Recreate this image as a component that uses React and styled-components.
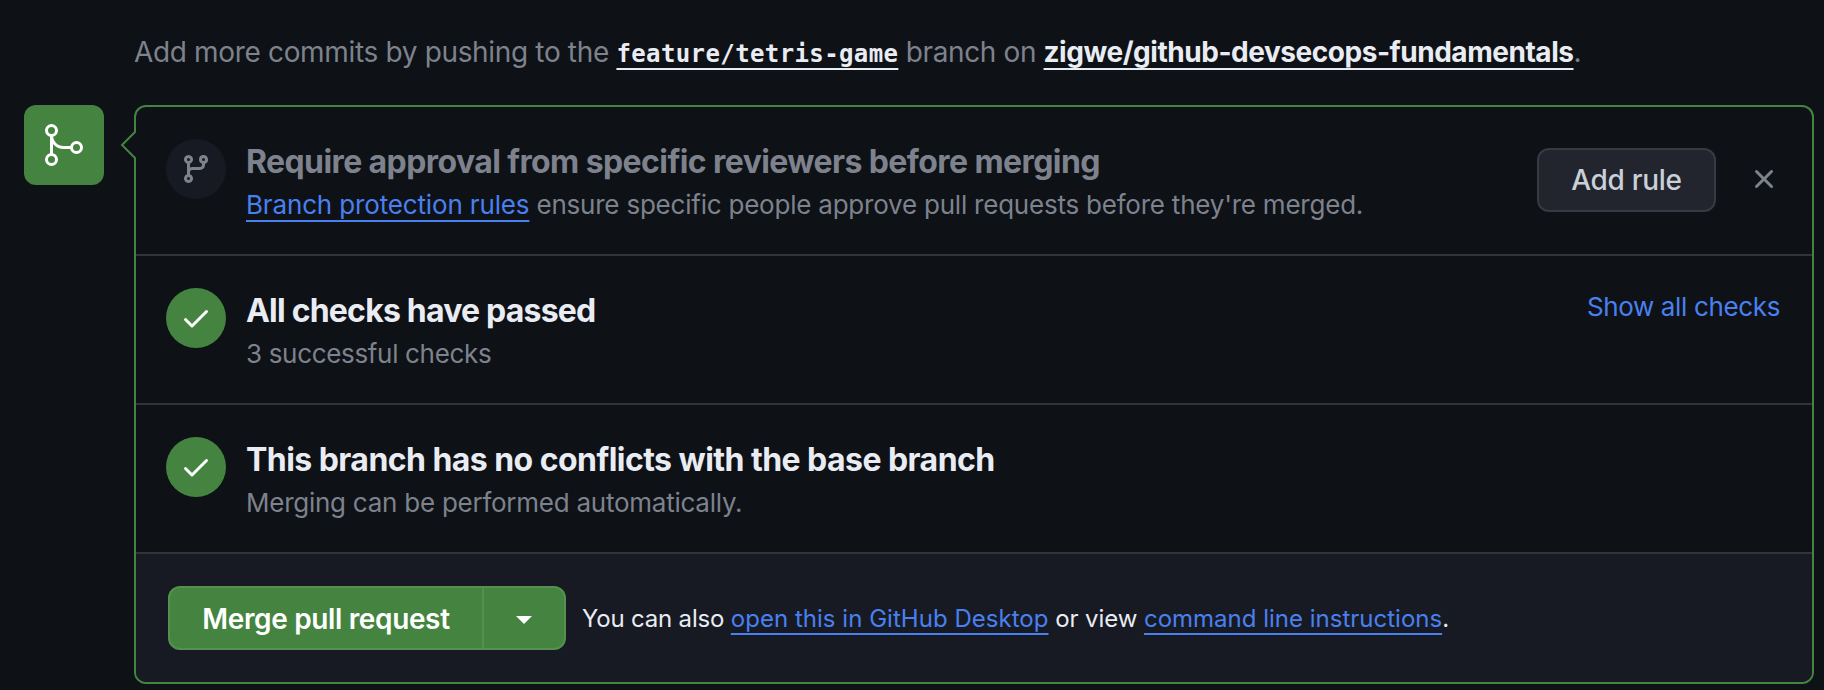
import React from "react";
import styled, { createGlobalStyle } from "styled-components";

const color = {
  canvas: "#0e1116",
  subtle: "#171a22",
  border: "#31353a",
  green: "#448440",
  greenEdge: "#549150",
  text: "#e9ecf2",
  muted: "#7d828d",
  link: "#4980f0",
};

const GlobalStyle = createGlobalStyle`
  * { box-sizing: border-box; }
  body {
    margin: 0;
    background: ${color.canvas};
    color: ${color.text};
    font-family: Inter, "Liberation Sans", sans-serif;
    -webkit-font-smoothing: antialiased;
  }
`;

const Page = styled.main`
  width: 1824px;
  height: 690px;
  padding: 31px 10px 0 24px;
  overflow: hidden;
`;

const Span = styled.span`
  letter-spacing: ${(p) => p.$track || 0}px;
`;

const Hint = styled.p`
  margin: 0 0 32px 110px;
  font-size: 28px;
  line-height: 42px;
  color: ${color.muted};
  white-space: pre;
`;

const Link = styled.a`
  display: inline-block;
  line-height: 1.15;
  color: ${(p) => (p.$strong ? color.text : color.link)};
  font-weight: ${(p) => (p.$strong ? 650 : 400)};
  letter-spacing: ${(p) => p.$track || 0}px;
  text-decoration: underline;
  text-decoration-thickness: 2px;
  text-underline-offset: 6px;
  text-decoration-skip-ink: none;
`;

const BranchLink = styled(Link)`
  font-family: "DejaVu Sans Mono", "Liberation Mono", monospace;
  font-size: 24px;
  font-weight: 700;
`;

const MergeArea = styled.section`
  display: flex;
  align-items: flex-start;
  gap: 30px;
`;

const Badge = styled.div`
  display: grid;
  place-items: center;
  flex: none;
  width: 80px;
  height: 80px;
  border-radius: 12px;
  background: ${color.green};
  color: #fff;
`;

const Panel = styled.div`
  position: relative;
  flex: 1;
  border: 2px solid ${color.green};
  border-radius: 12px;
`;

const Pointer = styled.svg`
  position: absolute;
  left: -16px;
  top: 23px;
`;

const Row = styled.div`
  display: flex;
  align-items: flex-start;
  height: ${(p) => (p.$first ? 147 : 149)}px;
  padding: 30px 32px 30px 30px;
  border-top: ${(p) => (p.$first ? "none" : `2px solid ${color.border}`)};
`;

const Status = styled.div`
  display: grid;
  place-items: center;
  flex: none;
  width: 60px;
  height: 60px;
  margin: 2px 20px 0 0;
  border-radius: 50%;
  background: ${(p) => (p.$ok ? color.green : color.subtle)};
  color: ${(p) => (p.$ok ? "#fff" : color.muted)};
`;

const RowText = styled.div`
  flex: 1;
  white-space: pre;
`;

const Title = styled.h3`
  margin: 0;
  padding-top: 1px;
  font-size: 32px;
  line-height: 47px;
  font-weight: 650;
  letter-spacing: ${(p) => p.$track || 0}px;
  color: ${(p) => (p.$muted ? color.muted : color.text)};
`;

const Detail = styled.p`
  margin: 0;
  font-size: 26px;
  line-height: 39px;
  color: ${color.muted};
`;

const Actions = styled.div`
  display: flex;
  align-items: center;
  gap: 32px;
  margin-top: 11px;
`;

const Button = styled.button`
  width: 179px;
  height: 64px;
  padding: 0;
  border: 2px solid #373a41;
  border-radius: 12px;
  background: #22252d;
  color: #c9d0d8;
  font: 550 28px/40px Inter, sans-serif;
  letter-spacing: ${(p) => p.$track || 0}px;
`;

const Dismiss = styled.button`
  display: grid;
  place-items: center;
  width: 32px;
  height: 32px;
  margin-top: -2px;
  padding: 0;
  border: 0;
  background: none;
  color: ${color.muted};
`;

const ShowAll = styled.a`
  padding-top: 1px;
  font-size: 26px;
  line-height: 39px;
  letter-spacing: ${(p) => p.$track || 0}px;
  color: ${color.link};
`;

const Footer = styled.div`
  display: flex;
  align-items: center;
  height: 130px;
  padding: 0 32px;
  border-top: 2px solid ${color.border};
  border-radius: 0 0 10px 10px;
  background: ${color.subtle};
`;

const ButtonGroup = styled.div`
  display: flex;
  width: 398px;
  height: 64px;
  margin-right: 16px;
  border: 2px solid ${color.greenEdge};
  border-radius: 12px;
  background: ${color.green};
`;

const MergeButton = styled.button`
  width: 314px;
  padding: 1px 0 0;
  border: 0;
  border-right: 2px solid ${color.greenEdge};
  background: none;
  color: #fff;
  font: 600 28px/40px Inter, sans-serif;
  letter-spacing: ${(p) => p.$track || 0}px;
`;

const MenuButton = styled.button`
  display: grid;
  place-items: center;
  flex: 1;
  padding: 0;
  border: 0;
  background: none;
`;

const Caret = styled.span`
  border: 8px solid transparent;
  border-top-color: #fff;
  border-bottom: 0;
  margin-top: 4px;
`;

const FooterText = styled.p`
  margin: 0;
  padding-top: 2px;
  font-size: 24px;
  line-height: 36px;
  white-space: pre;
`;

const Icon = ({ size, box, d }) => (
  <svg width={size} height={size} viewBox={`0 0 ${box} ${box}`} fill="currentColor" aria-hidden="true">
    <path d={d} />
  </svg>
);

const MERGE =
  "M15 13.25a3.25 3.25 0 1 1 6.5 0 3.25 3.25 0 0 1-6.5 0Zm-12.5 6a3.25 3.25 0 1 1 6.5 0 3.25 3.25 0 0 1-6.5 0Zm0-14.5a3.25 3.25 0 1 1 6.5 0 3.25 3.25 0 0 1-6.5 0ZM5.75 6.5a1.75 1.75 0 1 0-.001-3.501A1.75 1.75 0 0 0 5.75 6.5Zm0 14.5a1.75 1.75 0 1 0-.001-3.501A1.75 1.75 0 0 0 5.75 21Zm12.5-6a1.75 1.75 0 1 0-.001-3.501A1.75 1.75 0 0 0 18.25 15ZM6.5 7.25c0 2.9 2.35 5.25 5.25 5.25h4.5V14h-4.5A6.75 6.75 0 0 1 5 7.25ZM5.75 16.75A.75.75 0 0 1 5 16V8a.75.75 0 0 1 1.5 0v8a.75.75 0 0 1-.75.75Z";
const BRANCH =
  "M9.5 3.25a2.25 2.25 0 1 1 3 2.122V6A2.5 2.5 0 0 1 10 8.5H6a1 1 0 0 0-1 1v1.128a2.251 2.251 0 1 1-1.5 0V5.372a2.25 2.25 0 1 1 1.5 0v1.836A2.493 2.493 0 0 1 6 7h4a1 1 0 0 0 1-1v-.628A2.25 2.25 0 0 1 9.5 3.25Zm-6 0a.75.75 0 1 0 1.5 0 .75.75 0 0 0-1.5 0Zm8.25-.75a.75.75 0 1 0 0 1.5.75.75 0 0 0 0-1.5ZM4.25 12a.75.75 0 1 0 0 1.5.75.75 0 0 0 0-1.5Z";
const CHECK =
  "M13.78 4.22a.75.75 0 0 1 0 1.06l-7.25 7.25a.75.75 0 0 1-1.06 0L2.22 9.28a.751.751 0 0 1 .018-1.042.751.751 0 0 1 1.042-.018L6 10.94l6.72-6.72a.75.75 0 0 1 1.06 0Z";
const CLOSE =
  "M3.72 3.72a.75.75 0 0 1 1.06 0L8 6.94l3.22-3.22a.749.749 0 0 1 1.275.326.749.749 0 0 1-.215.734L9.06 8l3.22 3.22a.749.749 0 0 1-.326 1.275.749.749 0 0 1-.734-.215L8 9.06l-3.22 3.22a.751.751 0 0 1-1.042-.018.751.751 0 0 1-.018-1.042L6.94 8 3.72 4.78a.75.75 0 0 1 0-1.06Z";

export default function App() {
  return (
    <>
      <GlobalStyle />
      <Page>
        <Hint>
          <Span $track={-0.34}>Add more commits by pushing to the </Span>
          <BranchLink $strong $track={0.39}>feature/tetris-game</BranchLink>
          <Span $track={-0.39}> branch on </Span>
          <Link $strong $track={-0.46}>zigwe/github-devsecops-fundamentals</Link>.
        </Hint>
        <MergeArea>
          <Badge>
            <Icon size={48} box={24} d={MERGE} />
          </Badge>
          <Panel>
            <Pointer width="18" height="30" viewBox="0 0 18 30">
              <path d="M16 1.5 2.5 15 16 28.5h2v-27z" fill={color.canvas} />
              <path d="M15.5 1.5 2 15l13.5 13.5" fill="none" stroke={color.green} strokeWidth="2" />
            </Pointer>
            <Row $first>
              <Status>
                <Icon size={32} box={16} d={BRANCH} />
              </Status>
              <RowText>
                <Title $muted $track={-0.59}>Require approval from specific reviewers before merging</Title>
                <Detail>
                  <Link $track={-0.15}>Branch protection rules</Link>
                  <Span $track={-0.22}> ensure specific people approve pull requests before they're merged.</Span>
                </Detail>
              </RowText>
              <Actions>
                <Button $track={-0.3}>Add rule</Button>
                <Dismiss aria-label="Dismiss">
                  <Icon size={32} box={16} d={CLOSE} />
                </Dismiss>
              </Actions>
            </Row>
            <Row>
              <Status $ok>
                <Icon size={32} box={16} d={CHECK} />
              </Status>
              <RowText>
                <Title $track={-0.79}>All checks have passed</Title>
                <Detail><Span $track={-0.33}>3 successful checks</Span></Detail>
              </RowText>
              <ShowAll $track={-0.36}>Show all checks</ShowAll>
            </Row>
            <Row>
              <Status $ok>
                <Icon size={32} box={16} d={CHECK} />
              </Status>
              <RowText>
                <Title $track={-0.55}>This branch has no conflicts with the base branch</Title>
                <Detail><Span $track={-0.25}>Merging can be performed automatically.</Span></Detail>
              </RowText>
            </Row>
            <Footer>
              <ButtonGroup>
                <MergeButton $track={-0.36}>Merge pull request</MergeButton>
                <MenuButton aria-label="Select merge method">
                  <Caret />
                </MenuButton>
              </ButtonGroup>
              <FooterText>
                <Span $track={-0.19}>You can also </Span>
                <Link $track={0.03}>open this in GitHub Desktop</Link>
                <Span $track={-0.08}> or view </Span>
                <Link>command line instructions</Link>.
              </FooterText>
            </Footer>
          </Panel>
        </MergeArea>
      </Page>
    </>
  );
}
